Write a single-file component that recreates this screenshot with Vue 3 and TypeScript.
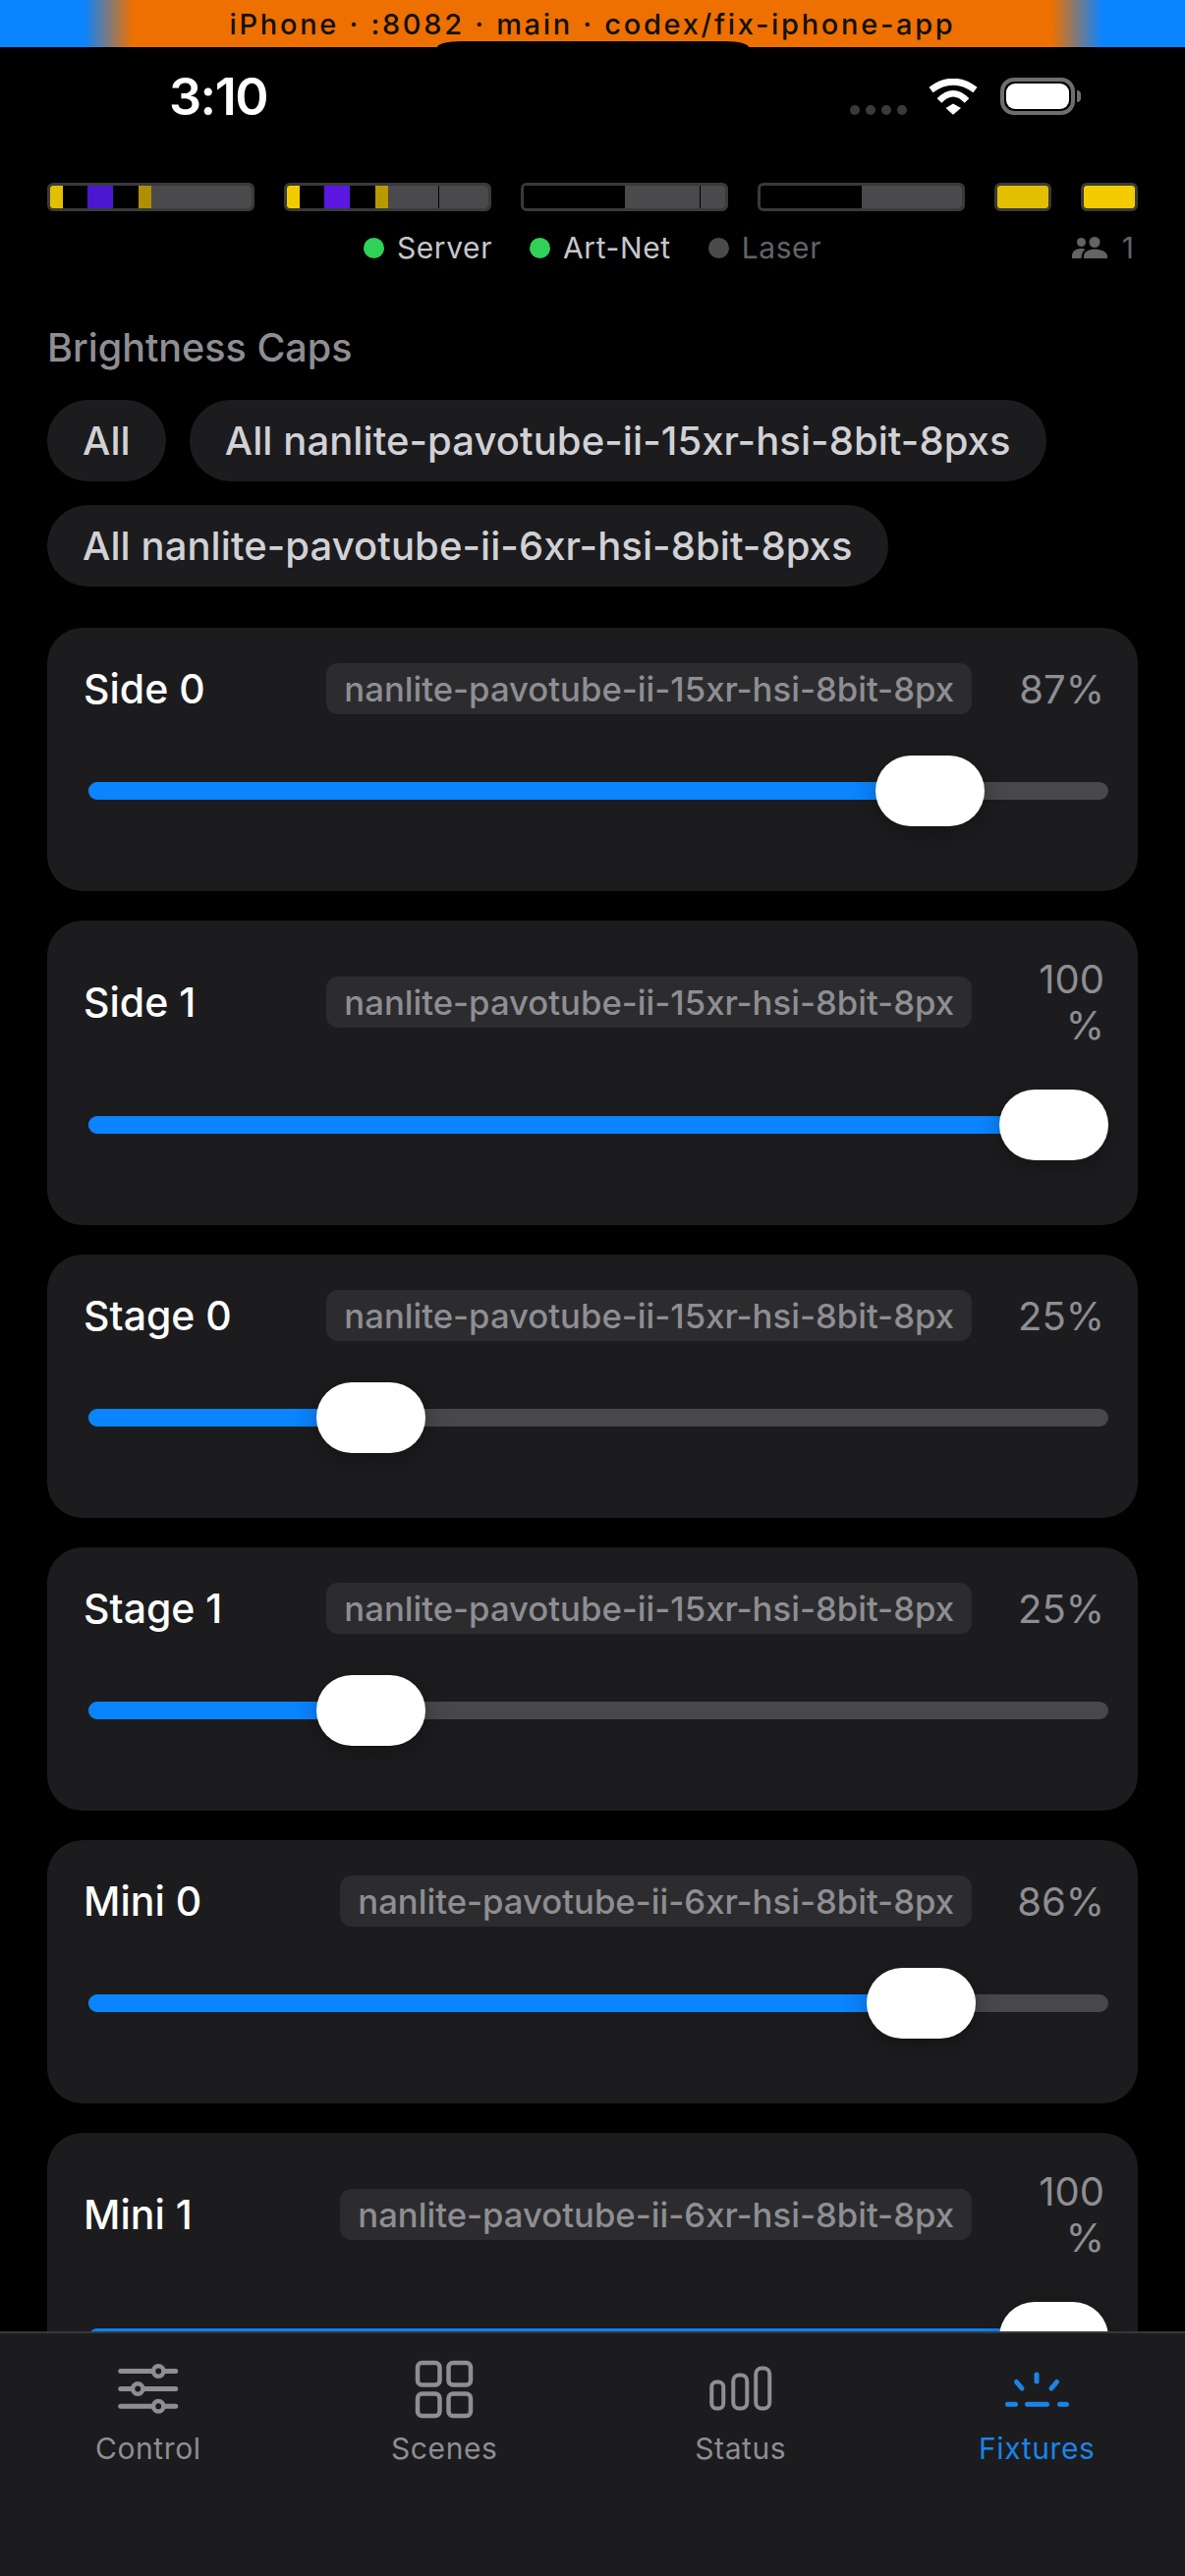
<script setup lang="ts">
interface Segment {
  color: string
  grow: number
}

interface Meter {
  segments: Segment[]
  tick?: number
}

interface Fixture {
  name: string
  model: string
  value: number
  level: number
}

const XR15 = 'nanlite-pavotube-ii-15xr-hsi-8bit-8px'
const XR6 = 'nanlite-pavotube-ii-6xr-hsi-8bit-8px'

const meters: Meter[] = [
  {
    segments: [
      { color: '#e2bf00', grow: 1 },
      { color: '#000', grow: 2 },
      { color: '#4c18cf', grow: 2 },
      { color: '#000', grow: 2 },
      { color: '#ad8f00', grow: 1 },
      { color: '#4a4a4c', grow: 8 },
    ],
  },
  {
    segments: [
      { color: '#f2cc00', grow: 1 },
      { color: '#000', grow: 2 },
      { color: '#5a18e0', grow: 2 },
      { color: '#000', grow: 2 },
      { color: '#b89a00', grow: 1 },
      { color: '#4a4a4c', grow: 8 },
    ],
    tick: 75,
  },
  {
    segments: [
      { color: '#000', grow: 1 },
      { color: '#4a4a4c', grow: 1 },
    ],
    tick: 87.5,
  },
  {
    segments: [
      { color: '#000', grow: 1 },
      { color: '#4a4a4c', grow: 1 },
    ],
  },
]

const services = [
  { name: 'Server', on: true },
  { name: 'Art-Net', on: true },
  { name: 'Laser', on: false },
]

const chips = ['All', 'All nanlite-pavotube-ii-15xr-hsi-8bit-8pxs', 'All nanlite-pavotube-ii-6xr-hsi-8bit-8pxs']

const fixtures: Fixture[] = [
  { name: 'Side 0', model: XR15, value: 87, level: 0.864 },
  { name: 'Side 1', model: XR15, value: 100, level: 1 },
  { name: 'Stage 0', model: XR15, value: 25, level: 0.25 },
  { name: 'Stage 1', model: XR15, value: 25, level: 0.25 },
  { name: 'Mini 0', model: XR6, value: 86, level: 0.854 },
  { name: 'Mini 1', model: XR6, value: 100, level: 1 },
]

const thumbLeft = (level: number) => `calc((100% - 111px) * ${level})`
const fillWidth = (level: number) => `calc((100% - 111px) * ${level} + 55px)`
</script>

<template>
  <div class="app">
    <div class="banner">
      <span>iPhone · :8082 · main · codex/fix-iphone-app</span>
      <i class="notch"></i>
    </div>

    <div class="statusbar">
      <span class="time">3:10</span>
      <div class="indicators">
        <div class="signal"><i></i><i></i><i></i><i></i></div>
        <svg class="wifi" width="50" height="37" viewBox="0 0 50 37" fill="none" stroke="#fff">
          <path d="M2.500 11.500Q25-5 47.500 11.500" stroke-width="7" />
          <path d="M11 22.500Q25 8 39 22.500" stroke-width="6.500" />
          <path d="M17.500 30 25 25.500 33 30 25 36.700Z" fill="#fff" stroke="none" />
        </svg>
        <div class="battery"><i></i></div>
      </div>
    </div>

    <main class="content">
      <div class="meters">
        <div v-for="(meter, i) in meters" :key="i" class="meter wide">
          <i
            v-for="(seg, j) in meter.segments"
            :key="j"
            :style="{ background: seg.color, flexGrow: seg.grow }"
          ></i>
          <b v-if="meter.tick" class="tick" :style="{ left: meter.tick + '%' }"></b>
        </div>
        <div class="meter narrow"><i class="amber-dim"></i></div>
        <div class="meter narrow"><i class="amber"></i></div>
      </div>

      <div class="connections">
        <div class="services">
          <span v-for="s in services" :key="s.name" class="service" :class="{ off: !s.on }">
            <i class="dot"></i>{{ s.name }}
          </span>
        </div>
        <span class="users">
          <svg width="36" height="22" viewBox="0 0 36 22" fill="#636366">
            <circle cx="9.500" cy="5.500" r="4.500" />
            <circle cx="23" cy="5.500" r="5.500" />
            <path d="M0 22v-3c0-4 4-7 9-7 2 0 3.500.4 4.800 1.100C10.800 14.800 9.500 18 9.500 22Z" />
            <path d="M12 22v-2c0-4.500 5-7.500 11-7.500S36 15.500 36 20v2Z" />
          </svg>
          1
        </span>
      </div>

      <h2 class="heading">Brightness Caps</h2>

      <div class="chips">
        <button v-for="chip in chips" :key="chip" class="chip">{{ chip }}</button>
      </div>

      <div class="cards">
        <section v-for="f in fixtures" :key="f.name" class="card">
          <header class="card-head">
            <span class="name">{{ f.name }}</span>
            <span class="model">{{ f.model }}</span>
            <span class="pct">{{ f.value }}<wbr />%</span>
          </header>
          <div class="slider">
            <div class="track">
              <div class="fill" :style="{ width: fillWidth(f.level) }"></div>
            </div>
            <div class="thumb" :style="{ left: thumbLeft(f.level) }"></div>
          </div>
        </section>
      </div>
    </main>

    <nav class="tabbar">
      <div class="tab">
        <svg width="72" height="72" viewBox="0 0 72 72" fill="none" stroke="currentColor" stroke-width="5" stroke-linecap="round">
          <path d="M7.750 17.500H63.750M7.750 35.500H63.750M7.750 53.200H63.750" />
          <g fill="#1c1c1e" stroke-width="4.500">
            <circle cx="46.250" cy="17.500" r="5.200" />
            <circle cx="25.250" cy="35.500" r="5.200" />
            <circle cx="46.250" cy="53.200" r="5.200" />
          </g>
        </svg>
        <span>Control</span>
      </div>
      <div class="tab">
        <svg width="72" height="72" viewBox="0 0 72 72" fill="none" stroke="currentColor" stroke-width="4.500">
          <rect x="9" y="9" width="22.500" height="22.500" rx="4.500" />
          <rect x="40.500" y="9" width="22.500" height="22.500" rx="4.500" />
          <rect x="9" y="40.500" width="22.500" height="22.500" rx="4.500" />
          <rect x="40.500" y="40.500" width="22.500" height="22.500" rx="4.500" />
        </svg>
        <span>Scenes</span>
      </div>
      <div class="tab">
        <svg width="72" height="72" viewBox="0 0 72 72" fill="none" stroke="currentColor" stroke-width="4">
          <rect x="6.250" y="28.500" width="12" height="27" rx="5" />
          <rect x="28.250" y="21.500" width="14" height="34" rx="6" />
          <rect x="51.250" y="14.500" width="14" height="41" rx="6" />
        </svg>
        <span>Status</span>
      </div>
      <div class="tab active">
        <svg width="72" height="72" viewBox="0 0 72 72" fill="none" stroke="currentColor" stroke-width="5" stroke-linecap="round">
          <path d="M6.500 51.200H14.500M26.500 51.200H46.500M59.500 51.200H66.500" />
          <path d="M36 21V28M15.500 28.500 21 35M56.500 28.500 51 35" />
        </svg>
        <span>Fixtures</span>
      </div>
    </nav>
  </div>
</template>

<style>
html,
body {
  margin: 0;
  background: #000;
}
</style>

<style scoped>
.app {
  width: 1206px;
  height: 2622px;
  display: flex;
  flex-direction: column;
  overflow: hidden;
  background: #000;
  font-family: Inter, 'Noto Sans', sans-serif;
  color: #fff;
}

.banner {
  position: relative;
  height: 48px;
  flex: none;
  display: flex;
  align-items: center;
  justify-content: center;
  background: linear-gradient(90deg, #0a84ff 85px, #ee7000 135px, #ee7000 1070px, #0a84ff 1122px);
  color: #111;
  font-size: 29px;
  font-weight: 500;
  letter-spacing: 2.700px;
  white-space: nowrap;
}

.notch {
  position: absolute;
  left: 445px;
  bottom: 0;
  width: 317px;
  height: 6px;
  background: #000;
  border-radius: 24px 24px 0 0 / 6px 6px 0 0;
}

.statusbar {
  height: 100px;
  flex: none;
  display: flex;
  align-items: center;
  justify-content: space-between;
  padding: 0 112px 0 172px;
}

.time {
  font-size: 52px;
  font-weight: 600;
  letter-spacing: -1.500px;
}

.indicators {
  display: flex;
  align-items: flex-end;
  height: 38px;
}

.signal {
  display: flex;
  gap: 6px;
  margin-right: 22px;
}

.signal i {
  width: 10px;
  height: 10px;
  border-radius: 50%;
  background: #3a3a3c;
}

.wifi {
  margin-right: 23px;
}

.battery {
  position: relative;
  width: 76px;
  height: 38px;
  box-sizing: border-box;
  border: 4px solid #6e6e70;
  border-radius: 14px;
  padding: 2px;
}

.battery i {
  display: block;
  height: 100%;
  background: #fff;
  border-radius: 9px;
}

.battery::after {
  content: '';
  position: absolute;
  left: 74px;
  top: 9px;
  width: 4px;
  height: 12px;
  background: #6e6e70;
  border-radius: 0 4px 4px 0;
}

.content {
  flex: 1;
  min-height: 0;
  overflow: hidden;
  padding: 38px 48px 0;
}

.meters {
  display: flex;
  justify-content: space-between;
}

.meter {
  position: relative;
  display: flex;
  height: 29px;
  box-sizing: border-box;
  border: 3px solid #3a3a3c;
  border-radius: 6px;
  overflow: hidden;
}

.meter i {
  display: block;
  flex: 1 1 0;
}

.amber-dim {
  background: #e2bf00;
}

.amber {
  background: #f2cc00;
}

.wide {
  width: 211px;
}

.narrow {
  width: 58px;
}

.tick {
  position: absolute;
  top: 0;
  bottom: 0;
  width: 1px;
  background: #000;
}

.connections {
  display: grid;
  grid-template-columns: 1fr auto 1fr;
  align-items: center;
  height: 40px;
  margin-top: 17px;
  font-size: 30px;
}

.services {
  grid-column: 2;
  display: flex;
  gap: 38px;
}

.service {
  display: flex;
  align-items: center;
  gap: 13px;
  color: #c7c7cc;
  letter-spacing: 0.600px;
}

.dot {
  width: 21px;
  height: 21px;
  border-radius: 50%;
  background: #30d158;
}

.off {
  color: #636366;
}

.off .dot {
  background: #4a4a4c;
}

.users {
  grid-column: 3;
  justify-self: end;
  display: flex;
  align-items: center;
  gap: 15px;
  padding-right: 4px;
  color: #636366;
}

.heading {
  margin: 57px 0 28px;
  font-size: 39.500px;
  line-height: 50px;
  font-weight: 500;
  color: #8e8e93;
}

.chips {
  display: flex;
  flex-wrap: wrap;
  gap: 24px;
}

.chip {
  height: 83px;
  padding: 0 36px;
  border: none;
  border-radius: 42px;
  background: #1c1c1e;
  color: #d1d1d6;
  font: 500 40px Inter, 'Noto Sans', sans-serif;
  letter-spacing: 0.080px;
}

.cards {
  display: flex;
  flex-direction: column;
  gap: 30px;
  margin-top: 42px;
}

.card {
  padding: 36px 37px 66px;
  background: #1c1c1e;
  border-radius: 36px;
}

.card-head {
  display: flex;
  align-items: center;
  min-height: 52px;
}

.name {
  flex: 1;
  font-size: 41px;
  font-weight: 500;
}

.model {
  padding: 0 18px;
  height: 52px;
  line-height: 52px;
  background: #2c2c2e;
  border-radius: 12px;
  color: #8e8e93;
  font-size: 34.700px;
  font-weight: 500;
  white-space: nowrap;
}

.pct {
  box-sizing: border-box;
  width: 135px;
  margin-right: -3px;
  padding-left: 41px;
  text-align: right;
  font-size: 40px;
  line-height: 47px;
  color: #8e8e93;
}

.slider {
  position: relative;
  height: 72px;
  margin: 42px -7px 0 5px;
}

.track {
  position: absolute;
  top: 27px;
  left: 0;
  right: 0;
  height: 18px;
  background: #48484a;
  border-radius: 9px;
  overflow: hidden;
}

.fill {
  height: 100%;
  background: #0a84ff;
}

.thumb {
  position: absolute;
  top: 0;
  width: 111px;
  height: 72px;
  background: #fff;
  border-radius: 36px;
  box-shadow: 0 6px 24px rgba(0, 0, 0, 0.3);
}

.tabbar {
  flex: none;
  height: 249px;
  box-sizing: border-box;
  display: grid;
  grid-template-columns: repeat(4, 1fr);
  border-top: 2px solid #38383a;
  background: #1c1c1e;
}

.tab {
  display: flex;
  flex-direction: column;
  align-items: center;
  padding-top: 21px;
  color: #8e8e93;
  font-size: 30px;
  line-height: 40px;
  letter-spacing: 0.600px;
}

.tab span {
  margin-top: 4px;
}

.active {
  color: #1a84e8;
}
</style>
